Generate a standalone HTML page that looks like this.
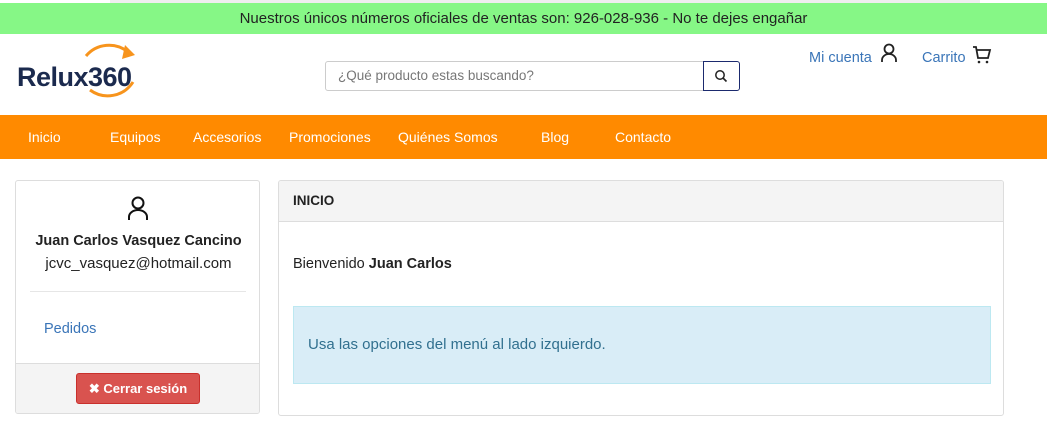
<!DOCTYPE html>
<html><head><meta charset="utf-8"><style>
*{box-sizing:border-box;margin:0;padding:0}
body{width:1047px;height:435px;background:#fff;font-family:"Liberation Sans",sans-serif;position:relative;overflow:hidden;color:#333}
.abs{position:absolute}
.top{left:0;top:3px;width:1047px;height:31px;background:#86f786;text-align:center;font-size:15px;line-height:31px;color:#222}
.nav{left:0;top:115px;width:1047px;height:44px;background:#ff8a00}
.nav span{position:absolute;top:0;line-height:44px;color:#fff;font-size:14px}
</style></head><body>
<div class="abs" style="left:110px;top:0;width:870px;height:3px;background:#eee"></div>
<div class="abs top">Nuestros únicos números oficiales de ventas son: 926-028-936 - No te dejes engañar</div>
<svg class="abs" style="left:14px;top:40px" width="130" height="68" viewBox="0 0 130 68">
<path d="M72 16 A30 30 0 0 1 114 12" fill="none" stroke="#f7941d" stroke-width="3"/>
<path d="M111 5 L121 15 L108 19 Z" fill="#f7941d"/>
<path d="M76 50 A30 30 0 0 0 119 42" fill="none" stroke="#f7941d" stroke-width="3"/>
<text x="3" y="46" font-family="Liberation Sans" font-weight="bold" font-size="27" fill="#1b2a4e" letter-spacing="-0.5">Relux360</text>
</svg>
<div class="abs" style="left:325px;top:61px;width:379px;height:30px;border:1px solid #ccc;border-radius:3px 0 0 3px;font-size:13.5px;color:#777;line-height:28px;padding-left:12px">¿Qué producto estas buscando?</div>
<div class="abs" style="left:703px;top:61px;width:37px;height:30px;border:1px solid #1b2a6e;border-radius:0 3px 3px 0"></div>
<svg class="abs" style="left:714px;top:69px" width="14" height="14" viewBox="0 0 14 14"><circle cx="6" cy="6" r="4.2" fill="none" stroke="#222" stroke-width="1.5"/><path d="M9 9 L12.5 12.5" stroke="#222" stroke-width="1.6"/></svg>
<div class="abs" style="left:809px;top:50px;font-size:14.5px;color:#3a75b8">Mi cuenta</div>
<svg class="abs" style="left:879px;top:43px" width="20" height="22" viewBox="0 0 20 22"><circle cx="10" cy="6" r="4.5" fill="none" stroke="#222" stroke-width="1.8"/><path d="M3 19 V17 A7 6 0 0 1 17 17 V19" fill="none" stroke="#222" stroke-width="1.8"/></svg>
<div class="abs" style="left:922px;top:50px;font-size:14.5px;color:#3a75b8">Carrito</div>
<svg class="abs" style="left:972px;top:45px" width="20" height="20" viewBox="0 0 20 20"><path d="M1 2 H4 L6 13 H16 L18 5 H5" fill="none" stroke="#222" stroke-width="1.8"/><circle cx="7" cy="17" r="1.3" fill="#222"/><circle cx="15" cy="17" r="1.3" fill="#222"/></svg>
<div class="abs nav">
<span style="left:28px">Inicio</span><span style="left:110px">Equipos</span><span style="left:193px">Accesorios</span><span style="left:289px">Promociones</span><span style="left:398px">Quiénes Somos</span><span style="left:541px">Blog</span><span style="left:615px">Contacto</span>
</div>
<div class="abs" style="left:15px;top:180px;width:245px;height:234px;border:1px solid #ddd;border-radius:3px;background:#fff;overflow:hidden">
<svg class="abs" style="left:111px;top:15px" width="22" height="26" viewBox="0 0 22 26"><circle cx="11" cy="7" r="5.5" fill="none" stroke="#111" stroke-width="2"/><path d="M2 24 V21 A9 7 0 0 1 20 21 V24" fill="none" stroke="#111" stroke-width="2"/></svg>
<div class="abs" style="left:0;width:245px;top:52px;text-align:center;font-weight:bold;font-size:14.5px;color:#222">Juan Carlos Vasquez Cancino</div>
<div class="abs" style="left:0;width:245px;top:74px;text-align:center;font-size:15px;color:#222">jcvc_vasquez@hotmail.com</div>
<div class="abs" style="left:14px;top:110px;width:216px;height:1px;background:#e6e6e6"></div>
<div class="abs" style="left:28px;top:140px;font-size:14.5px;color:#3a75b8">Pedidos</div>
<div class="abs" style="left:0;top:182px;width:245px;height:52px;background:#f4f4f4;border-top:1px solid #ddd"></div>
<div class="abs" style="left:60px;top:192px;width:124px;height:31px;background:#d9534f;border:1px solid #c9302c;border-radius:3px;color:#fff;font-weight:bold;font-size:13px;text-align:center;line-height:29px">✖ Cerrar sesión</div>
</div>
<div class="abs" style="left:278px;top:180px;width:726px;height:236px;border:1px solid #ddd;border-radius:3px;overflow:hidden">
<div style="height:41px;background:#f4f4f4;border-bottom:1px solid #ddd;padding-left:14px;line-height:40px;font-weight:bold;font-size:13.5px;color:#222">INICIO</div>
<div class="abs" style="left:14px;top:75px;font-size:14.5px;color:#222">Bienvenido <b>Juan Carlos</b></div>
<div class="abs" style="left:14px;top:125px;width:698px;height:78px;background:#d9edf7;border:1px solid #bce8f1;color:#31708f;font-size:15px;line-height:76px;padding-left:14px">Usa las opciones del menú al lado izquierdo.</div>
</div>
</body></html>
